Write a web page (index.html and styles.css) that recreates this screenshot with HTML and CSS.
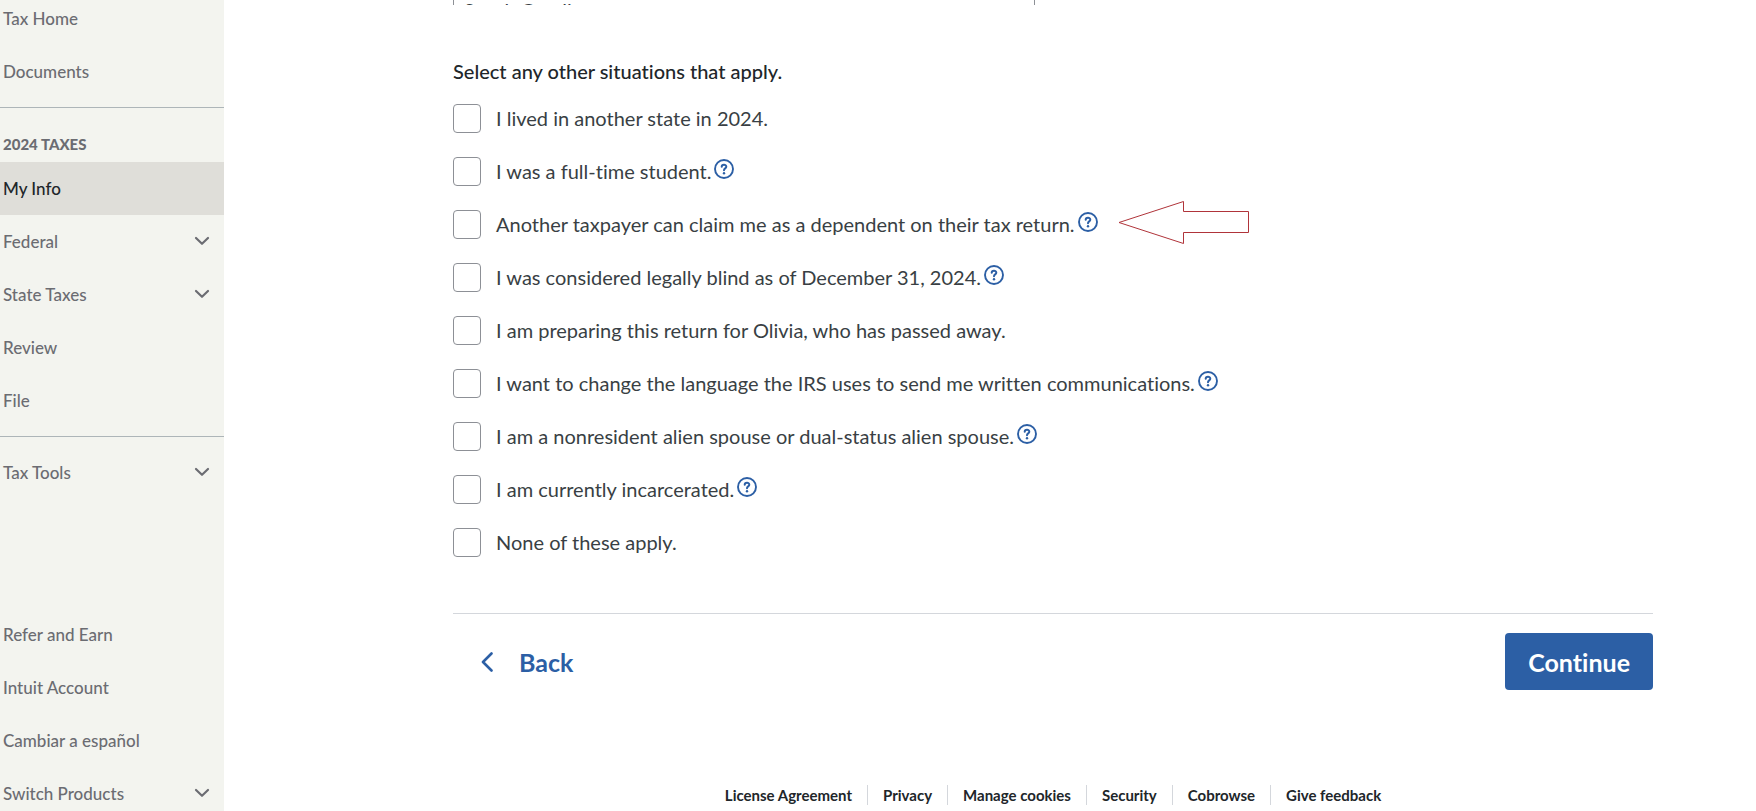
FILE: index.html
```html
<!DOCTYPE html>
<html lang="en">
<head>
    <meta charset="UTF-8">
    <meta name="viewport" content="width=device-width, initial-scale=1.0">
    <title>My Info</title>
    <link rel="stylesheet" href="styles.css">
</head>
<body>
    <!-- shared icons -->
    <svg class="icon-defs" width="0" height="0" aria-hidden="true">
        <symbol id="chevron" viewBox="0 0 16 10">
            <path d="M2 2 L8 7.8 L14 2" fill="none" stroke="currentColor" stroke-width="2.2" stroke-linecap="round" stroke-linejoin="round"/>
        </symbol>
        <symbol id="help" viewBox="0 0 20 20">
            <circle cx="10" cy="10" r="9" fill="none" stroke="currentColor" stroke-width="1.9"/>
            <path d="M7.7 7.8 C7.7 5.2 12.3 5.1 12.3 7.8 C12.3 9.4 10 9.4 10 11.2" fill="none" stroke="currentColor" stroke-width="2" stroke-linecap="round"/>
            <circle cx="10" cy="14.2" r="1.2" fill="currentColor"/>
        </symbol>
    </svg>

    <div class="layout">
        <aside class="sidebar">
            <nav>
                <a class="nav-item" href="#">Tax Home</a>
                <a class="nav-item" href="#">Documents</a>
                <hr>
                <h2>2024 TAXES</h2>
                <a class="nav-item active" href="#">My Info</a>
                <a class="nav-item" href="#">Federal <svg class="chevron"><use href="#chevron"/></svg></a>
                <a class="nav-item" href="#">State Taxes <svg class="chevron"><use href="#chevron"/></svg></a>
                <a class="nav-item" href="#">Review</a>
                <a class="nav-item" href="#">File</a>
                <hr>
                <a class="nav-item" href="#">Tax Tools <svg class="chevron"><use href="#chevron"/></svg></a>
            </nav>
            <nav class="account-nav">
                <a class="nav-item" href="#">Refer and Earn</a>
                <a class="nav-item" href="#">Intuit Account</a>
                <a class="nav-item" href="#">Cambiar a español</a>
                <a class="nav-item" href="#">Switch Products <svg class="chevron"><use href="#chevron"/></svg></a>
            </nav>
        </aside>

        <main>
            <div class="state-field">
                <select aria-label="State">
                    <option>South Carolina</option>
                </select>
            </div>

            <form>
                <fieldset>
                    <legend>Select any other situations that apply.</legend>
                    <div class="option">
                        <input type="checkbox" id="other-state">
                        <label for="other-state">I lived in another state in 2024.</label>
                    </div>
                    <div class="option">
                        <input type="checkbox" id="student">
                        <label for="student">I was a full-time student.</label>
                        <button type="button" class="help" aria-label="Help"><svg><use href="#help"/></svg></button>
                    </div>
                    <div class="option">
                        <input type="checkbox" id="dependent">
                        <label for="dependent">Another taxpayer can claim me as a dependent on their tax return.</label>
                        <button type="button" class="help" aria-label="Help"><svg><use href="#help"/></svg></button>
                        <svg class="arrow" viewBox="0 0 131 44" aria-hidden="true">
                            <path d="M1 22.5 L65.5 1.5 V11.5 H130.5 V32.5 H65.5 V43.5 Z" fill="none" stroke="#b0343a"/>
                        </svg>
                    </div>
                    <div class="option">
                        <input type="checkbox" id="blind">
                        <label for="blind">I was considered legally blind as of December 31, 2024.</label>
                        <button type="button" class="help" aria-label="Help"><svg><use href="#help"/></svg></button>
                    </div>
                    <div class="option">
                        <input type="checkbox" id="passed">
                        <label for="passed">I am preparing this return for Olivia, who has passed away.</label>
                    </div>
                    <div class="option">
                        <input type="checkbox" id="language">
                        <label for="language">I want to change the language the IRS uses to send me written communications.</label>
                        <button type="button" class="help" aria-label="Help"><svg><use href="#help"/></svg></button>
                    </div>
                    <div class="option">
                        <input type="checkbox" id="nonresident">
                        <label for="nonresident">I am a nonresident alien spouse or dual-status alien spouse.</label>
                        <button type="button" class="help" aria-label="Help"><svg><use href="#help"/></svg></button>
                    </div>
                    <div class="option">
                        <input type="checkbox" id="incarcerated">
                        <label for="incarcerated">I am currently incarcerated.</label>
                        <button type="button" class="help" aria-label="Help"><svg><use href="#help"/></svg></button>
                    </div>
                    <div class="option">
                        <input type="checkbox" id="none">
                        <label for="none">None of these apply.</label>
                    </div>
                </fieldset>

                <div class="actions">
                    <button type="button" class="back">
                        <svg viewBox="0 0 12 20"><path d="M10.5 1.5 L2 10 L10.5 18.5" fill="none" stroke="currentColor" stroke-width="2.6" stroke-linecap="round" stroke-linejoin="round"/></svg>
                        Back
                    </button>
                    <button type="submit" class="continue">Continue</button>
                </div>
            </form>

            <footer>
                <a href="#">License Agreement</a>
                <a href="#">Privacy</a>
                <a href="#">Manage cookies</a>
                <a href="#">Security</a>
                <a href="#">Cobrowse</a>
                <a href="#">Give feedback</a>
            </footer>
        </main>
    </div>
</body>
</html>
```
FILE: styles.css
```css
* {
    box-sizing: border-box;
}
body {
    margin: 0;
    font-family: Lato, "Open Sans", sans-serif;
    font-variant-ligatures: none;
    color: #21262a;
    background-color: #fff;
}
.icon-defs {
    position: absolute;
}
.layout {
    display: flex;
    height: 100vh;
    overflow: hidden;
}

/* Sidebar */
.sidebar {
    width: 224px;
    flex-shrink: 0;
    background-color: #f3f4ef;
}
.sidebar nav:first-child {
    margin-top: -8px;
}
.nav-item {
    display: flex;
    align-items: center;
    justify-content: space-between;
    height: 53px;
    padding: 0 14px 1px 3px;
    font-size: 17px;
    font-weight: 500;
    color: #6b6c72;
    text-decoration: none;
}
.nav-item.active {
    background-color: #dfded9;
    color: #21262a;
}
.sidebar hr {
    margin: 9px 0;
    border: 0;
    border-top: 1px solid #adb5b8;
}
.sidebar h2 {
    margin: 0;
    padding: 17px 3px 8px;
    font-size: 15px;
    line-height: 20px;
    font-weight: 900;
    color: #6b6c72;
}
.chevron {
    width: 16px;
    height: 10px;
}
.account-nav {
    margin-top: 109px;
}

/* Content */
main {
    flex: 1;
    padding: 0 103px 0 229px;
}
.state-field {
    height: 5px;
    overflow: hidden;
}
.state-field select {
    appearance: none;
    display: block;
    width: 582px;
    height: 48px;
    margin-top: -14px;
    padding: 0 10px;
    border: 1px solid #8d9096;
    border-radius: 4px;
    background-color: #fff;
    font-family: inherit;
    font-variant-ligatures: none;
    font-size: 20px;
    color: #393f44;
}
fieldset {
    display: flex;
    flex-direction: column;
    gap: 24px;
    margin: 0;
    padding: 0 0 56px;
    border: 0;
    border-bottom: 1px solid #d4d7dc;
}
legend {
    padding: 54px 0 21px;
    font-size: 20px;
    line-height: 24px;
    font-weight: 500;
}
.option {
    display: flex;
    align-items: center;
    height: 29px;
}
.option input {
    appearance: none;
    width: 28px;
    height: 29px;
    margin: 0 15px 0 0;
    border: 1px solid #8d9096;
    border-radius: 4px;
}
.option label {
    padding-bottom: 2px;
    font-size: 20px;
    line-height: 28px;
    color: #393f44;
}
.help {
    height: 20px;
    margin: 0 0 6px 3px;
    padding: 0;
    border: 0;
    background: none;
    color: #2c5fa5;
    cursor: pointer;
}
.help svg {
    display: block;
    width: 20px;
    height: 20px;
}
.arrow {
    width: 131px;
    height: 44px;
    margin: 0 0 6px 20px;
}

/* Buttons */
.actions {
    display: flex;
    justify-content: space-between;
    align-items: center;
    padding-top: 19px;
}
.actions button {
    height: 57px;
    border: 0;
    border-radius: 4px;
    font-family: inherit;
    font-variant-ligatures: none;
    font-size: 25px;
    font-weight: bold;
    cursor: pointer;
}
.back {
    display: flex;
    align-items: center;
    gap: 26px;
    padding: 0 28px;
    background: none;
    color: #2c5fa5;
}
.back svg {
    width: 12px;
    height: 20px;
}
.actions .continue {
    padding: 0 23px;
    background-color: #2c5fa5;
    color: #fff;
}

footer {
    display: flex;
    justify-content: center;
    padding-top: 95px;
}
footer a {
    padding: 0 15px;
    border-left: 1px solid #d4d7dc;
    font-size: 15px;
    line-height: 20px;
    font-weight: bold;
    color: #21262a;
    text-decoration: none;
}
footer a:first-child {
    border-left: 0;
}
```
